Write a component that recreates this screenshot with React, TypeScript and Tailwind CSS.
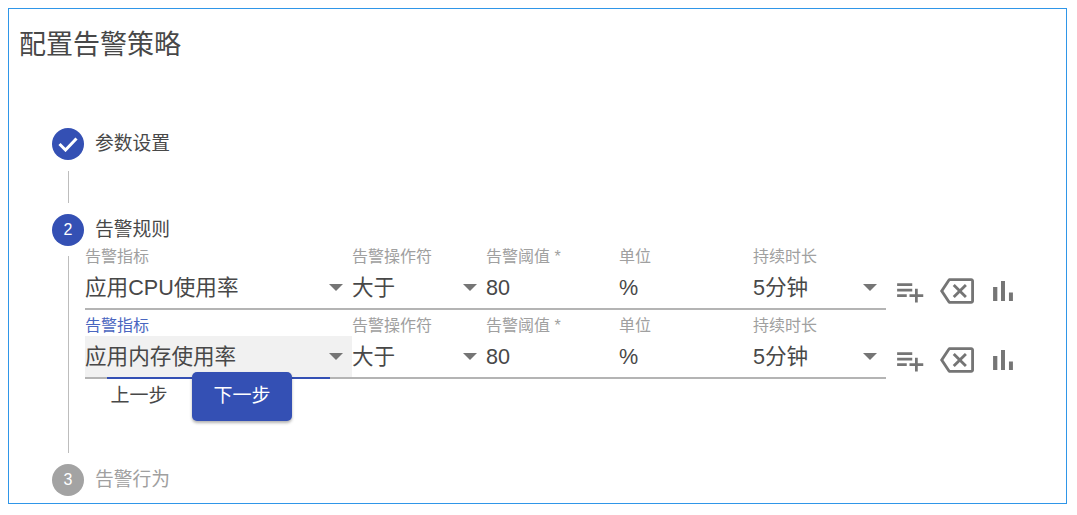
import { MdOutlineBackspace, MdPlaylistAdd } from "react-icons/md";

const FONT = "font-['Liberation_Sans','Noto_Sans_CJK_SC',sans-serif]";

interface FieldProps {
  label: string;
  value: string;
  width: string;
  select?: boolean;
  focused?: boolean;
}

function Arrow() {
  return (
    <svg width="14" height="7" viewBox="0 0 14 7" className="mr-[9px] shrink-0">
      <path d="M0 0h14L7 7z" fill="#757575" />
    </svg>
  );
}

function Check() {
  return (
    <svg width="20" height="16" viewBox="0 0 20 16" fill="none" stroke="white" strokeWidth="3">
      <path d="M1.5 8l6 6L18.5 2.5" />
    </svg>
  );
}

function BarChart() {
  return (
    <svg width="34" height="34" viewBox="0 0 24 24" fill="currentColor" className="ml-[12px]">
      <path d="M5 9.2h3V19H5zM10.6 5h2.8v14h-2.8zm5.6 8H19v6h-2.8z" />
    </svg>
  );
}

function Field({ label, value, width, select, focused }: FieldProps) {
  return (
    <div className={`${width} shrink-0`}>
      <div className={`pt-[8px] pb-[2px] text-[16px] leading-[16px] ${focused ? "text-[#4a66c0]" : "text-[#a0a0a0]"}`}>
        {label}
      </div>
      <div
        className={`relative flex h-[43px] items-center justify-between border-b-2 border-[#b4b4b4] ${
          focused ? "bg-[#f1f1f1]" : ""
        }`}
      >
        <span className="text-[21.6px] leading-[28px] text-[#484848]">{value}</span>
        {select && <Arrow />}
        {focused && <div className="absolute inset-x-[22px] -bottom-[2px] h-[2px] bg-[#3450b4]" />}
      </div>
    </div>
  );
}

function RowIcons() {
  return (
    <div className="flex items-center pt-[31px] text-[#757575]">
      <MdPlaylistAdd size={33} className="ml-[7px]" />
      <MdOutlineBackspace size={34} className="ml-[14px]" />
      <BarChart />
    </div>
  );
}

function RuleRow({ metric, focused }: { metric: string; focused?: boolean }) {
  return (
    <div className="flex">
      <Field label="告警指标" value={metric} width="w-[267px]" select focused={focused} />
      <Field label="告警操作符" value="大于" width="w-[134px]" select />
      <Field label="告警阈值 *" value="80" width="w-[133px]" />
      <Field label="单位" value="%" width="w-[134px]" />
      <Field label="持续时长" value="5分钟" width="w-[133px]" select />
      <RowIcons />
    </div>
  );
}

function StepHead({ mark, label, color, muted }: { mark: React.ReactNode; label: string; color: string; muted?: boolean }) {
  return (
    <div className="flex h-[32px] items-center gap-[11px]">
      <div className={`flex h-[32px] w-[32px] items-center justify-center rounded-full text-[16px] text-white ${color}`}>
        {mark}
      </div>
      <span className={`text-[18.75px] leading-[28px] ${muted ? "text-[#a0a0a0]" : "text-[#484848]"}`}>{label}</span>
    </div>
  );
}

export default function App() {
  return (
    <div className={`bg-white p-[8px] ${FONT}`}>
      <div className="h-[496px] w-[1059px] border border-[#2f96e8] pl-[10px]">
        <h1 className="pt-[16px] text-[27px] leading-[40px] font-normal text-[#484848]">配置告警策略</h1>
        <div className="mt-[63px] pl-[33px]">
          <StepHead mark={<Check />} label="参数设置" color="bg-[#3450b4]" />
          <div className="my-[11px] ml-[16px] h-[32px] border-l border-[#bdbdbd]" />
          <StepHead mark="2" label="告警规则" color="bg-[#3450b4]" />
          <div className="mt-[10px] mb-[11px] ml-[16px] flex h-[197px] flex-col border-l border-[#bdbdbd] pl-[16px]">
            <div className="-mt-[15px]">
              <RuleRow metric="应用CPU使用率" />
              <RuleRow metric="应用内存使用率" focused />
              <div className="relative -mt-[7px] ml-[4px] flex gap-[3px]">
                <button type="button" className="h-[49px] w-[100px] text-[19px] text-[#484848]">
                  上一步
                </button>
                <button
                  type="button"
                  className="h-[49px] w-[100px] rounded-[5px] bg-[#3450b4] text-[19px] text-white shadow-[0_2px_3px_rgba(0,0,0,0.3)]"
                >
                  下一步
                </button>
              </div>
            </div>
          </div>
          <StepHead mark="3" label="告警行为" color="bg-[#a3a3a3]" muted />
        </div>
      </div>
    </div>
  );
}
